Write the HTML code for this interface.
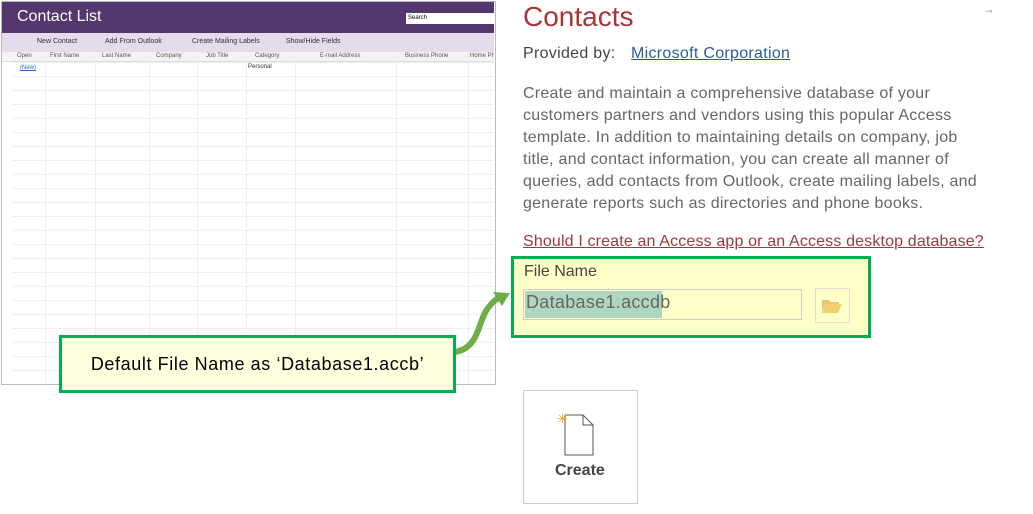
<!DOCTYPE html>
<html><head><meta charset="utf-8"><style>
*{margin:0;padding:0;box-sizing:border-box}
body{width:1033px;height:514px;background:#fff;position:relative;overflow:hidden;font-family:"Liberation Sans",sans-serif}
.a{position:absolute;white-space:nowrap}
.lp{left:1px;top:1px;width:495px;height:384px;border:1px solid #bbb;background:#fff}
.hdr{left:2px;top:2px;width:492px;height:31px;background:#55376f}
.tb{left:2px;top:33px;width:492px;height:19px;background:#e4dbec;font-size:7px;color:#333}
.gh{left:2px;top:52px;width:492px;height:10px;background:#f3f3f3;border-bottom:1px solid #ddd;font-size:6px;color:#555;overflow:hidden}
.row{background-image:linear-gradient(#eee 1px,transparent 1px);background-size:100% 14px}
p.t{font-size:16px;color:#666;line-height:22px;letter-spacing:0.25px;white-space:normal}
.vl{top:52px;width:1px;height:330px;background:#eee}
</style></head><body>
<div class="a lp"></div>
<div class="a hdr"><span class="a" style="left:15px;top:6px;color:#fff;font-size:16px">Contact List</span>
<div class="a" style="left:404px;top:11px;width:88px;height:11px;background:#fff;font-size:6px;padding-left:2px;line-height:11px">Search</div></div>
<div class="a tb"><span class="a" style="left:35px;top:5px">New Contact</span><span class="a" style="left:103px;top:5px">Add From Outlook</span><span class="a" style="left:190px;top:5px">Create Mailing Labels</span><span class="a" style="left:284px;top:5px">Show/Hide Fields</span></div>
<div class="a gh"><span class="a" style="left:15px;top:1px">Open</span><span class="a" style="left:48px;top:1px">First Name</span><span class="a" style="left:100px;top:1px">Last Name</span><span class="a" style="left:154px;top:1px">Company</span><span class="a" style="left:204px;top:1px">Job Title</span><span class="a" style="left:253px;top:1px">Category</span><span class="a" style="left:318px;top:1px">E-mail Address</span><span class="a" style="left:403px;top:1px">Business Phone</span><span class="a" style="left:468px;top:1px">Home Ph</span></div>
<div class="a row" style="left:12px;top:62px;width:482px;height:320px;background-color:#fff"></div>
<div class="a vl" style="left:45px"></div><div class="a vl" style="left:95px"></div><div class="a vl" style="left:149px"></div><div class="a vl" style="left:197px"></div><div class="a vl" style="left:246px"></div><div class="a vl" style="left:295px"></div><div class="a vl" style="left:396px"></div><div class="a vl" style="left:468px"></div>
<div class="a" style="left:20px;top:65px;font-size:6px;color:#36c;text-decoration:underline">(New)</div>
<div class="a" style="left:248px;top:64px;font-size:6px;color:#333">Personal</div>

<div class="a" style="left:523px;top:1px;font-size:28px;color:#a4373a">Contacts</div>
<div class="a" style="left:985px;top:6px;font-size:9px;color:#999">⊸</div>
<div class="a" style="left:523px;top:45px;font-size:16px;color:#444;letter-spacing:0.3px">Provided by:</div>
<div class="a" style="left:631px;top:45px;font-size:16px;color:#2e5a9a;text-decoration:underline;letter-spacing:0.3px">Microsoft Corporation</div>
<p class="a t" style="left:523px;top:83px;width:470px">Create and maintain a comprehensive database of your customers partners and vendors using this popular Access template. In addition to maintaining details on company, job title, and contact information, you can create all manner of queries, add contacts from Outlook, create mailing labels, and generate reports such as directories and phone books.</p>
<div class="a" style="left:523px;top:233px;font-size:16px;color:#a4373a;text-decoration:underline;letter-spacing:0.15px">Should I create an Access app or an Access desktop database?</div>

<div class="a" style="left:511px;top:256px;width:360px;height:82px;border:3px solid #00b050;background:#ffffc8"></div>
<div class="a" style="left:524px;top:263px;font-size:16px;color:#444">File Name</div>
<div class="a" style="left:523px;top:289px;width:279px;height:31px;border:1px solid #ccc"></div>
<div class="a" style="left:525px;top:291px;width:137px;height:27px;background:#afd7c0"></div>
<div class="a" style="left:526px;top:292px;font-size:18px;color:#666;letter-spacing:0.3px">Database1.accdb</div>
<div class="a" style="left:815px;top:288px;width:35px;height:35px;border:1px solid #ddd"></div>
<svg class="a" style="left:821px;top:297px" width="22" height="17"><path d="M1 3h7l2 2h8v2H5L1 15z" fill="#e8c870"/><path d="M5 7h16l-4 9H1z" fill="#f0d070"/></svg>

<svg class="a" style="left:0;top:0" width="1033" height="514"><path d="M455 352 C480 348 478 320 488 308 C494 300 498 298 503 296" stroke="#70ad47" stroke-width="6" fill="none"/><path d="M510 293 L493 292 L502 306 Z" fill="#70ad47"/></svg>
<div class="a" style="left:59px;top:335px;width:397px;height:58px;border:3px solid #00b050;background:#ffffe0;font-size:18px;color:#000;text-align:center;line-height:52px;letter-spacing:0.6px">Default File Name as ‘Database1.accb’</div>

<div class="a" style="left:523px;top:390px;width:115px;height:114px;border:1px solid #ccc;background:#fff"></div>
<svg class="a" style="left:557px;top:411px" width="40" height="45"><path d="M8 4h18l10 10v30H8z" fill="#fff" stroke="#555"/><path d="M26 4v10h10" fill="none" stroke="#555"/><text x="0" y="12" font-size="13" fill="#e8a000">✳</text></svg>
<div class="a" style="left:555px;top:462px;font-size:16px;font-weight:bold;color:#444">Create</div>
</body></html>
